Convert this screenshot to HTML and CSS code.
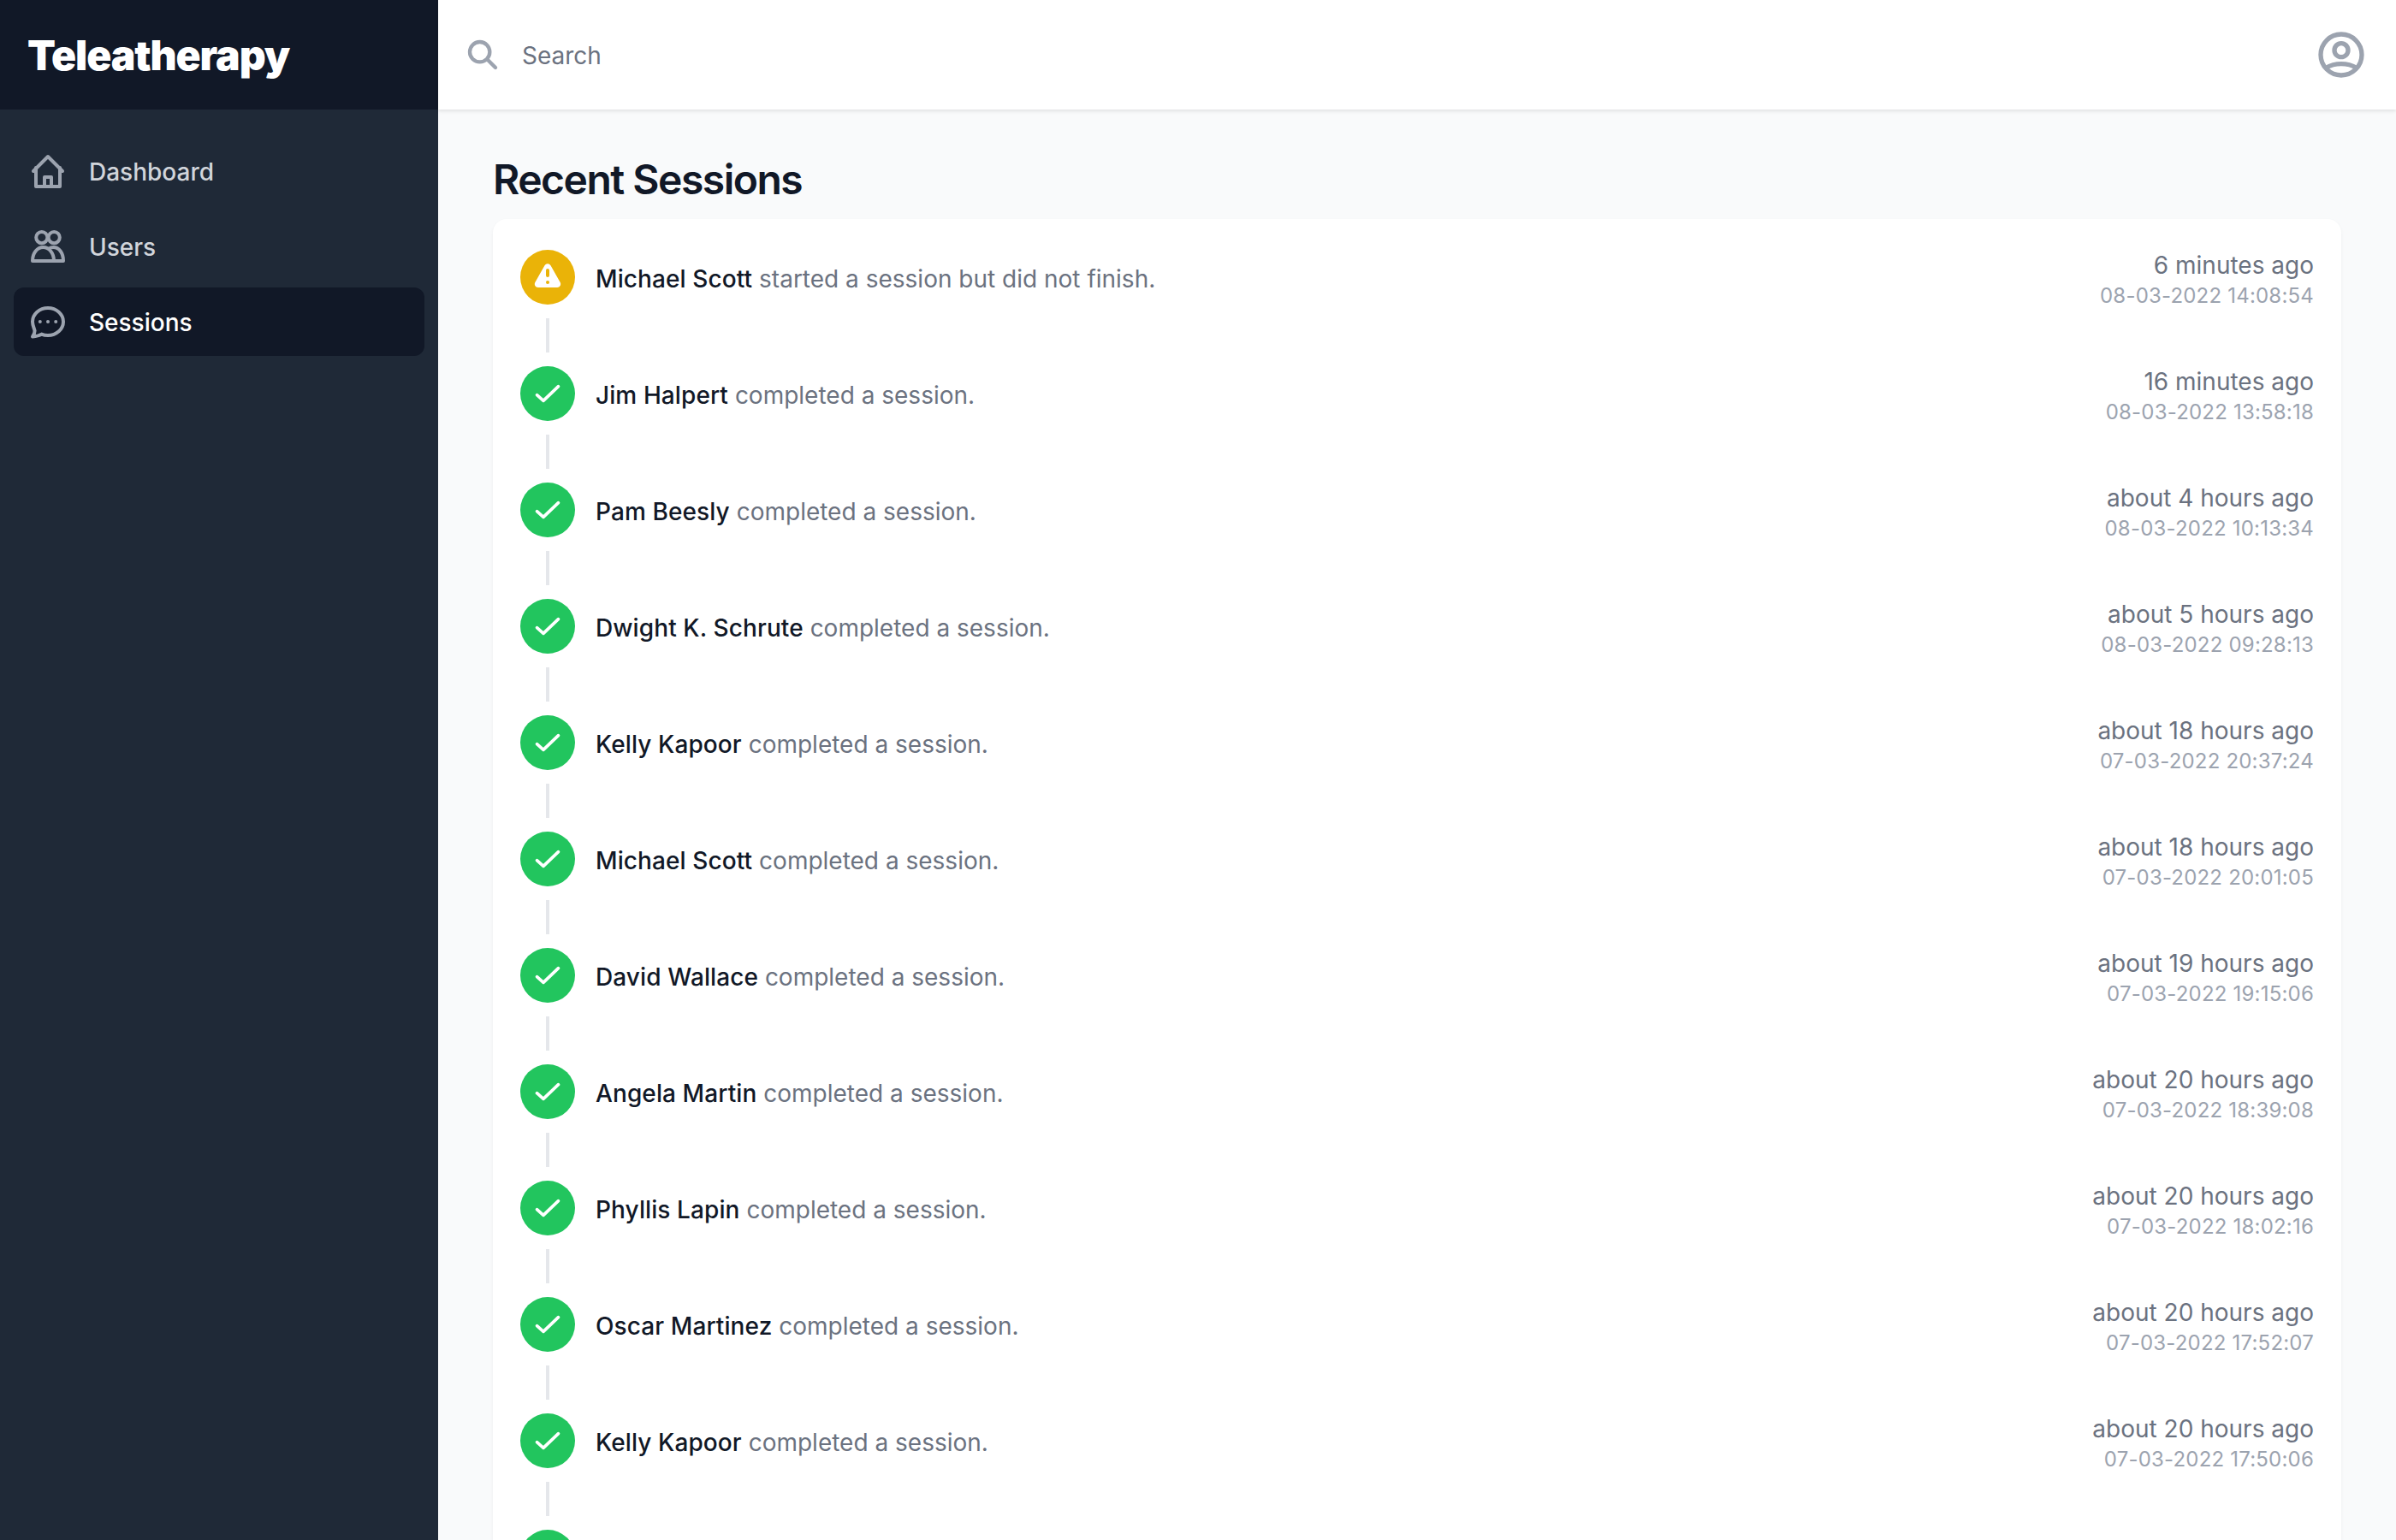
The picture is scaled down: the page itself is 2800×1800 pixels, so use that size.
FILE: index.html
```html
<!DOCTYPE html>
<html lang="en">
<head>
  <meta charset="UTF-8">
  <meta name="viewport" content="width=device-width, initial-scale=1.0">
  <title>Teleatherapy - Sessions</title>
  <link rel="stylesheet" href="styles.css">
</head>
<body>

  <!-- Icons shared by the session rows -->
  <svg class="sprite" aria-hidden="true">
    <symbol id="icon-check" viewBox="0 0 24 24">
      <path d="M4.5 13l4.5 4L19.5 7" fill="none" stroke="currentColor" stroke-width="2.200" stroke-linecap="round" stroke-linejoin="round"/>
    </symbol>
    <symbol id="icon-warning" viewBox="0 0 20 20">
      <path fill="currentColor" fill-rule="evenodd" clip-rule="evenodd" d="M8.257 3.099c.765-1.36 2.722-1.36 3.486 0l5.58 9.92c.75 1.334-.213 2.98-1.742 2.98H4.42c-1.53 0-2.493-1.646-1.743-2.98l5.58-9.92zM11 13a1 1 0 11-2 0 1 1 0 012 0zm-1-8a1 1 0 00-1 1v3a1 1 0 002 0V6a1 1 0 00-1-1z"/>
    </symbol>
  </svg>

  <div class="app">
    <aside class="sidebar">
      <div class="brand">Teleatherapy</div>
      <nav class="nav">
        <a class="nav-item" href="#">
          <svg class="nav-icon" viewBox="0 0 24 24" fill="none" stroke="currentColor" stroke-width="2" stroke-linecap="round" stroke-linejoin="round">
            <path d="M3.500 12L12 3.500l8.500 8.500"/>
            <path d="M5 10v11h14V10"/>
            <path d="M10 21v-5.500h4V21"/>
          </svg>
          <span class="nav-label">Dashboard</span>
        </a>
        <a class="nav-item" href="#">
          <svg class="nav-icon" viewBox="0 0 24 24" fill="none" stroke="currentColor" stroke-width="2" stroke-linecap="round" stroke-linejoin="round">
            <circle cx="8.400" cy="6.800" r="3.300"/>
            <circle cx="15.600" cy="6.800" r="3.300"/>
            <path d="M3 20.500C3 15.800 5.800 12.500 9.200 12.500S15.500 15.800 15.500 20.500z"/>
            <path d="M12.500 13.300c.8-.5 1.700-.8 2.700-.8 3.300 0 5.800 3.300 5.800 8h-5.500"/>
          </svg>
          <span class="nav-label">Users</span>
        </a>
        <a class="nav-item active" href="#">
          <svg class="nav-icon" viewBox="0 0 24 24" fill="none" stroke="currentColor" stroke-width="2" stroke-linecap="round" stroke-linejoin="round">
            <path d="M12 4c4.970 0 9 3.600 9 8s-4.030 8-9 8c-1.300 0-2.600-.25-3.700-.7-1.500.9-3.300 1.300-5.300 1.500.8-1 1.300-2.200 1.300-3.500C3.900 15.700 3 14 3 12c0-4.400 4.030-8 9-8z"/>
            <path d="M7.400 12h.01M12 12h.01M16.600 12h.01"/>
          </svg>
          <span class="nav-label">Sessions</span>
        </a>
      </nav>
    </aside>

    <div class="content">
      <header class="topbar">
        <div class="search">
          <svg class="search-icon" viewBox="0 0 24 24" fill="none" stroke="currentColor" stroke-width="2.600" stroke-linecap="round" stroke-linejoin="round">
            <path d="M21 21l-6-6m2-5a7 7 0 11-14 0 7 7 0 0114 0z"/>
          </svg>
          <span class="search-text">Search</span>
        </div>
        <svg class="profile-icon" viewBox="0 0 24 24" fill="none" stroke="currentColor" stroke-width="2" stroke-linecap="round" stroke-linejoin="round">
          <path d="M5.121 17.804A13.937 13.937 0 0112 16c2.500 0 4.847.655 6.879 1.804M15 10a3 3 0 11-6 0 3 3 0 016 0zm6 2a9 9 0 11-18 0 9 9 0 0118 0z"/>
        </svg>
      </header>

      <main class="main">
        <h1 class="title">Recent Sessions</h1>

        <ul class="sessions">
          <li>
            <div class="session">
              <span class="badge warning"><svg><use href="#icon-warning"/></svg></span>
              <p class="summary"><b>Michael Scott</b> started a session but did not finish.</p>
              <div class="when"><div class="ago">6 minutes ago</div><div class="stamp">08-03-2022 14:08:54</div></div>
            </div>
            <div class="connector"></div>
          </li>
          <li>
            <div class="session">
              <span class="badge done"><svg><use href="#icon-check"/></svg></span>
              <p class="summary"><b>Jim Halpert</b> completed a session.</p>
              <div class="when"><div class="ago">16 minutes ago</div><div class="stamp">08-03-2022 13:58:18</div></div>
            </div>
            <div class="connector"></div>
          </li>
          <li>
            <div class="session">
              <span class="badge done"><svg><use href="#icon-check"/></svg></span>
              <p class="summary"><b>Pam Beesly</b> completed a session.</p>
              <div class="when"><div class="ago">about 4 hours ago</div><div class="stamp">08-03-2022 10:13:34</div></div>
            </div>
            <div class="connector"></div>
          </li>
          <li>
            <div class="session">
              <span class="badge done"><svg><use href="#icon-check"/></svg></span>
              <p class="summary"><b>Dwight K. Schrute</b> completed a session.</p>
              <div class="when"><div class="ago">about 5 hours ago</div><div class="stamp">08-03-2022 09:28:13</div></div>
            </div>
            <div class="connector"></div>
          </li>
          <li>
            <div class="session">
              <span class="badge done"><svg><use href="#icon-check"/></svg></span>
              <p class="summary"><b>Kelly Kapoor</b> completed a session.</p>
              <div class="when"><div class="ago">about 18 hours ago</div><div class="stamp">07-03-2022 20:37:24</div></div>
            </div>
            <div class="connector"></div>
          </li>
          <li>
            <div class="session">
              <span class="badge done"><svg><use href="#icon-check"/></svg></span>
              <p class="summary"><b>Michael Scott</b> completed a session.</p>
              <div class="when"><div class="ago">about 18 hours ago</div><div class="stamp">07-03-2022 20:01:05</div></div>
            </div>
            <div class="connector"></div>
          </li>
          <li>
            <div class="session">
              <span class="badge done"><svg><use href="#icon-check"/></svg></span>
              <p class="summary"><b>David Wallace</b> completed a session.</p>
              <div class="when"><div class="ago">about 19 hours ago</div><div class="stamp">07-03-2022 19:15:06</div></div>
            </div>
            <div class="connector"></div>
          </li>
          <li>
            <div class="session">
              <span class="badge done"><svg><use href="#icon-check"/></svg></span>
              <p class="summary"><b>Angela Martin</b> completed a session.</p>
              <div class="when"><div class="ago">about 20 hours ago</div><div class="stamp">07-03-2022 18:39:08</div></div>
            </div>
            <div class="connector"></div>
          </li>
          <li>
            <div class="session">
              <span class="badge done"><svg><use href="#icon-check"/></svg></span>
              <p class="summary"><b>Phyllis Lapin</b> completed a session.</p>
              <div class="when"><div class="ago">about 20 hours ago</div><div class="stamp">07-03-2022 18:02:16</div></div>
            </div>
            <div class="connector"></div>
          </li>
          <li>
            <div class="session">
              <span class="badge done"><svg><use href="#icon-check"/></svg></span>
              <p class="summary"><b>Oscar Martinez</b> completed a session.</p>
              <div class="when"><div class="ago">about 20 hours ago</div><div class="stamp">07-03-2022 17:52:07</div></div>
            </div>
            <div class="connector"></div>
          </li>
          <li>
            <div class="session">
              <span class="badge done"><svg><use href="#icon-check"/></svg></span>
              <p class="summary"><b>Kelly Kapoor</b> completed a session.</p>
              <div class="when"><div class="ago">about 20 hours ago</div><div class="stamp">07-03-2022 17:50:06</div></div>
            </div>
            <div class="connector"></div>
          </li>
          <li>
            <div class="session">
              <span class="badge done"><svg><use href="#icon-check"/></svg></span>
              <div class="when"><div class="ago">about 20 hours ago</div></div>
            </div>
          </li>
        </ul>
      </main>
    </div>
  </div>

</body>
</html>
```

FILE: styles.css
```css
* {
  box-sizing: border-box;
}

body {
  margin: 0;
  font-family: 'Inter', sans-serif;
  background-color: #f9fafb;
  color: #111827;
}

.sprite {
  display: none;
}

.app {
  display: flex;
  height: 100vh;
  overflow: hidden;
}

/* Sidebar */
.sidebar {
  width: 512px;
  flex-shrink: 0;
  background-color: #1f2937;
}

.brand {
  height: 128px;
  padding-left: 32px;
  display: flex;
  align-items: center;
  background-color: #111827;
  color: #fff;
  font-size: 48px;
  font-weight: 900;
  letter-spacing: -1.1px;
}

.nav {
  display: flex;
  flex-direction: column;
  gap: 8px;
  padding: 32px 16px;
}

.nav-item {
  display: flex;
  align-items: center;
  gap: 24px;
  height: 80px;
  padding: 0 16px;
  border-radius: 12px;
  color: #d1d5db;
  font-size: 28px;
  font-weight: 500;
  text-decoration: none;
}

.nav-item.active {
  background-color: #111827;
  color: #fff;
}

.nav-label {
  padding-top: 2px;
}

.nav-icon {
  width: 48px;
  height: 48px;
  color: #9ca3af;
}

/* Top bar */
.content {
  flex: 1;
  min-width: 0;
  display: flex;
  flex-direction: column;
}

.topbar {
  height: 128px;
  flex-shrink: 0;
  display: flex;
  align-items: center;
  justify-content: space-between;
  padding: 0 32px;
  background-color: #fff;
  box-shadow: 0 2px 4px rgba(0, 0, 0, 0.1);
  position: relative;
}

.search {
  display: flex;
  align-items: center;
  gap: 26px;
}

.search-icon {
  width: 40px;
  height: 40px;
  color: #9ca3af;
}

.search-text {
  padding-top: 2px;
  font-size: 28px;
  color: #6b7280;
}

.profile-icon {
  width: 64px;
  height: 64px;
  color: #9ca3af;
}

/* Session list */
.main {
  flex: 1;
  min-height: 0;
  padding: 54px 64px 0;
}

.title {
  margin: 0 0 18px;
  font-size: 48px;
  line-height: 56px;
  font-weight: 600;
  letter-spacing: -1.5px;
  color: #111827;
}

.sessions {
  list-style: none;
  margin: 0;
  padding: 32px;
  background-color: #fff;
  border-radius: 16px;
  box-shadow: 0 2px 4px rgba(0, 0, 0, 0.05);
}

.session {
  display: flex;
  align-items: center;
  gap: 24px;
  height: 72px;
}

.badge {
  width: 64px;
  height: 64px;
  flex-shrink: 0;
  display: flex;
  align-items: center;
  justify-content: center;
  border-radius: 50%;
  color: #fff;
}

.badge svg {
  width: 40px;
  height: 40px;
}

.badge.warning {
  background-color: #eab308;
}

.badge.done {
  background-color: #22c55e;
}

.connector {
  width: 4px;
  height: 40px;
  margin: 12px 0 12px 30px;
  background-color: #e5e7eb;
}

.summary {
  flex: 1;
  margin: 0;
  padding-top: 3px;
  font-size: 28px;
  line-height: 40px;
  color: #6b7280;
}

.summary b {
  font-weight: 500;
  letter-spacing: 0.1px;
  color: #111827;
}

.when {
  margin-left: auto;
  padding-top: 3px;
  text-align: right;
}

.ago {
  font-size: 28px;
  line-height: 40px;
  color: #6b7280;
}

.stamp {
  font-size: 24px;
  line-height: 32px;
  letter-spacing: 0.2px;
  color: #9ca3af;
}
```
